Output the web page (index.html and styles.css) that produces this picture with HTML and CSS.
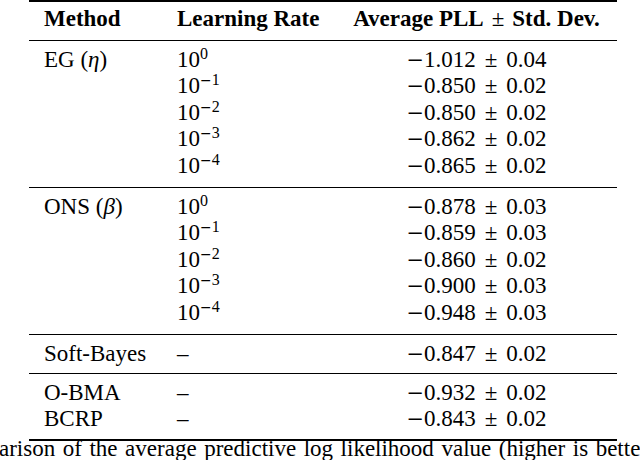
FILE: index.html
```html
<!DOCTYPE html>
<html>
<head>
<meta charset="utf-8">
<link rel="stylesheet" href="styles.css">
</head>
<body>
<div class="page">
  <div class="tbl">
    <div class="head row">
      <div class="c1 b">Method</div>
      <div class="c2 b">Learning Rate</div>
      <div class="c3 b">Average PLL<span class="pmh">±</span>Std. Dev.</div>
    </div>
    <div class="group">
      <div class="row"><div class="c1">EG (<i>η</i>)</div><div class="c2">10<sup>0</sup></div><div class="c3"><span class="neg">−</span>1.012<span class="pm">±</span>0.04</div></div>
      <div class="row"><div class="c1"></div><div class="c2">10<sup><span class="sneg">−</span>1</sup></div><div class="c3"><span class="neg">−</span>0.850<span class="pm">±</span>0.02</div></div>
      <div class="row"><div class="c1"></div><div class="c2">10<sup><span class="sneg">−</span>2</sup></div><div class="c3"><span class="neg">−</span>0.850<span class="pm">±</span>0.02</div></div>
      <div class="row"><div class="c1"></div><div class="c2">10<sup><span class="sneg">−</span>3</sup></div><div class="c3"><span class="neg">−</span>0.862<span class="pm">±</span>0.02</div></div>
      <div class="row"><div class="c1"></div><div class="c2">10<sup><span class="sneg">−</span>4</sup></div><div class="c3"><span class="neg">−</span>0.865<span class="pm">±</span>0.02</div></div>
    </div>
    <div class="group">
      <div class="row"><div class="c1">ONS (<i>β</i>)</div><div class="c2">10<sup>0</sup></div><div class="c3"><span class="neg">−</span>0.878<span class="pm">±</span>0.03</div></div>
      <div class="row"><div class="c1"></div><div class="c2">10<sup><span class="sneg">−</span>1</sup></div><div class="c3"><span class="neg">−</span>0.859<span class="pm">±</span>0.03</div></div>
      <div class="row"><div class="c1"></div><div class="c2">10<sup><span class="sneg">−</span>2</sup></div><div class="c3"><span class="neg">−</span>0.860<span class="pm">±</span>0.02</div></div>
      <div class="row"><div class="c1"></div><div class="c2">10<sup><span class="sneg">−</span>3</sup></div><div class="c3"><span class="neg">−</span>0.900<span class="pm">±</span>0.03</div></div>
      <div class="row"><div class="c1"></div><div class="c2">10<sup><span class="sneg">−</span>4</sup></div><div class="c3"><span class="neg">−</span>0.948<span class="pm">±</span>0.03</div></div>
    </div>
    <div class="group short">
      <div class="row"><div class="c1">Soft-Bayes</div><div class="c2">–</div><div class="c3"><span class="neg">−</span>0.847<span class="pm">±</span>0.02</div></div>
    </div>
    <div class="group short">
      <div class="row"><div class="c1">O-BMA</div><div class="c2">–</div><div class="c3"><span class="neg">−</span>0.932<span class="pm">±</span>0.02</div></div>
      <div class="row"><div class="c1">BCRP</div><div class="c2">–</div><div class="c3"><span class="neg">−</span>0.843<span class="pm">±</span>0.02</div></div>
    </div>
  </div>
  <div class="caption">arison of the average predictive log likelihood value (higher is better)</div>
</div>
</body>
</html>
```

FILE: styles.css
```css
html, body {
  margin: 0;
  padding: 0;
  background: #fff;
}
.page {
  width: 640px;
  height: 460px;
  overflow: hidden;
  font-family: "Liberation Serif", "Times New Roman", serif;
  font-size: 23px;
  color: #000;
}
.tbl {
  margin-left: 29px;
  width: 588px;
  border-top: 2px solid #000;
  border-bottom: 2px solid #000;
}
.row {
  display: grid;
  grid-template-columns: 133px 173px 253px;
  padding-left: 15px;
  line-height: 26.5px;
  white-space: nowrap;
}
.head {
  padding-top: 4px;
  padding-bottom: 7.5px;
}
.b {
  font-weight: bold;
}
.pmh {
  font-weight: normal;
  margin: 0 8px;
}
.group {
  border-top: 1px solid #000;
  padding-top: 5.5px;
  padding-bottom: 8px;
}
.group.short {
  padding-bottom: 6px;
}
.c3 {
  text-align: center;
}
sup {
  font-size: 16px;
  vertical-align: 8px;
  line-height: 0;
}
.neg {
  font-family: "DejaVu Serif", serif;
  font-size: 21px;
}
.sneg {
  font-family: "DejaVu Serif", serif;
  font-size: 14px;
}
.pm {
  margin: 0 9px;
}
.caption {
  margin-top: 0;
  margin-left: -1px;
  line-height: 16px;
  white-space: nowrap;
  word-spacing: 1.8px;
}
```
